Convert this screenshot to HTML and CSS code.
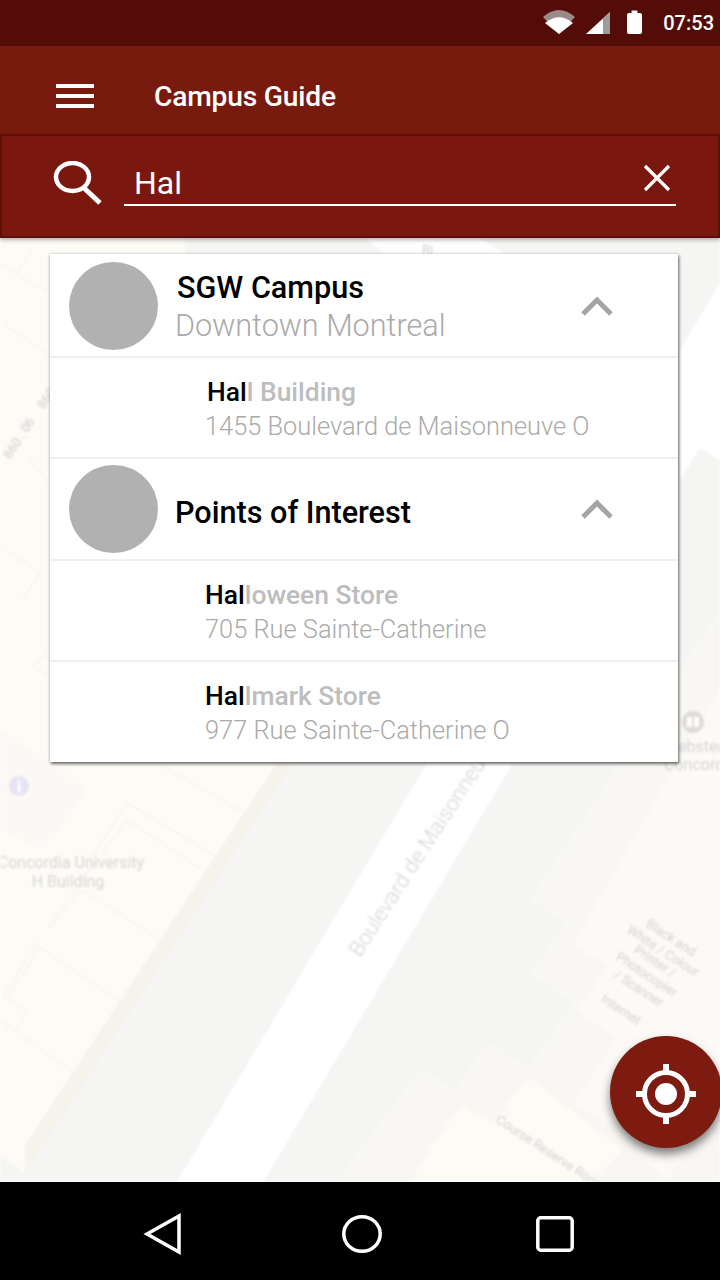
FILE: index.html
```html
<!DOCTYPE html>
<html lang="en">
<head>
<meta charset="UTF-8">
<meta name="viewport" content="width=device-width, initial-scale=1.0">
<title>Campus Guide</title>
<link rel="stylesheet" href="styles.css">
</head>
<body>
<div class="phone">
    <div class="status-bar">
        <svg class="wifi" width="32" height="24" viewBox="0 0 32 24">
            <path d="M0 7 Q16 -7 32 7 L16 24 Z" fill="#9a8a88"/>
            <path d="M2 13 Q16 1.5 30 13 L16 24 Z" fill="#fff"/>
        </svg>
        <svg class="signal" width="24" height="22" viewBox="0 0 24 22">
            <path d="M0 22 L24 0 V22 Z" fill="#fff"/>
            <path d="M17 22 V6.4 L24 0 V22 Z" fill="#9c9c9c"/>
        </svg>
        <svg class="battery" width="15" height="24" viewBox="0 0 15 24">
            <path d="M4.5 1.5 A1 1 0 0 1 5.5 0.5 H9.5 A1 1 0 0 1 10.5 1.5 V3 H13 A2 2 0 0 1 15 5 V22 A2 2 0 0 1 13 24 H2 A2 2 0 0 1 0 22 V5 A2 2 0 0 1 2 3 H4.5 Z" fill="#fff"/>
        </svg>
        <span class="clock">07:53</span>
    </div>

    <div class="app-bar">
        <div class="burger"><span></span><span></span><span></span></div>
        <h1>Campus Guide</h1>
    </div>

    <div class="search-bar">
        <svg class="search-icon" width="50" height="46" viewBox="0 0 50 46">
            <ellipse cx="19.5" cy="16" rx="16.5" ry="14" fill="none" stroke="#fff" stroke-width="4.5"/>
            <path d="M31 27 L47 42" stroke="#fff" stroke-width="5" fill="none"/>
        </svg>
        <div class="search-field">
            <span class="search-text">Hal</span>
            <svg class="clear-icon" width="30" height="30" viewBox="0 0 30 30">
                <path d="M3 3 L27 27 M27 3 L3 27" stroke="#fff" stroke-width="3.2" fill="none"/>
            </svg>
        </div>
    </div>

    <div class="map-area">
        <svg class="map" width="720" height="944" viewBox="0 238 720 944">
            <rect x="0" y="238" width="720" height="944" fill="#f5f5f4"/>
            <!-- buildings -->
            <path d="M0 238 H183 L293 763 L25 1173 L0 1155 Z" fill="#fdfbf6"/>
            <path d="M277 763 H293 L25 1173 V1145 Z" fill="#f6f2ec"/>
            <path d="M0 730 L50 762 L86 790 L70 813 L43 850 L0 830 Z" fill="#fbf8f5"/>
            <path d="M530 900 L720 610 V1182 H335 L422 1068 L455 1090 L487 1042 L528 1068 L562 1020 L573 1003 L530 973 L553 940 L565 923 Z" fill="#f8f7f4"/>
            <path d="M720 687 L573 945 L608 965 L578 1010 L617 1040 L573 1103 L613 1127 L667 1182 L720 1093 Z" fill="#fcfaf6"/>
            <path d="M528 1077 L623 1150 L590 1182 H410 L438 1137 L462 1105 L493 1123 Z" fill="#fdfbf6"/>
            <!-- roads -->
            <path d="M427 763 H513 L263 1182 H177 Z" fill="#fff"/>
            <path d="M365 238 H480 L505 254 H385 Z" fill="#fff"/>
            <path d="M720 283 L680 350 V480 L700 448 L720 460 Z" fill="#fff"/>
            <!-- outlines -->
            <g class="map-lines">
                <path d="M157 763 L257 820"/>
                <path d="M92 857 L127 803 L227 863"/>
                <path d="M47 927 L127 820 L207 873"/>
                <path d="M50 928 L82 890 L160 940"/>
                <path d="M3 997 L37 942"/>
                <path d="M27 1012 L8 997 L40 947 L120 1002"/>
                <path d="M27 1012 L17 1030"/>
                <path d="M0 1020 L73 1072"/>
                <path d="M0 263 L48 293"/>
                <path d="M17 273 L33 249"/>
                <path d="M3 324 L47 353"/>
                <path d="M27 456 L48 483"/>
                <path d="M0 546 L40 573 L23 599"/>
                <path d="M48 653 L33 666 L48 676"/>
            </g>
            <!-- labels -->
            <g class="map-text">
                <text x="71" y="868" text-anchor="middle">Concordia University</text>
                <text x="68" y="887" text-anchor="middle">H Building</text>
                <text transform="translate(360 958) rotate(-57)" class="road-text">Boulevard de Maisonneuve</text>
                <text transform="translate(10 460) rotate(-57)" class="label">860 . 06</text>
                <text transform="translate(44 410) rotate(-57)" class="label">860</text>
                <text x="422" y="254" class="label">Ri</text>
                <text transform="translate(495 1122) rotate(33)" class="small">Course Reserve Room</text>
                <text transform="translate(645 926) rotate(33)" class="small">Black and</text>
                <text transform="translate(626 932) rotate(33)" class="small">White / Colour</text>
                <text transform="translate(633 952) rotate(33)" class="small">Printer /</text>
                <text transform="translate(615 959) rotate(33)" class="small">Photocopier</text>
                <text transform="translate(613 977) rotate(33)" class="small">/ Scanner</text>
                <text transform="translate(600 1001) rotate(33)" class="small">Internet</text>
                <text x="664" y="752">Webster</text>
                <text x="664" y="770">Concordia</text>
            </g>
            <circle cx="19" cy="786" r="10" fill="#e6e3f3"/>
            <rect x="17.5" y="784" width="3" height="8" fill="#fff"/>
            <circle cx="19" cy="781" r="1.6" fill="#fff"/>
            <circle cx="693" cy="722" r="11" fill="#e0dbd9"/>
            <rect x="687" y="717" width="5" height="10" fill="#fff"/>
            <rect x="694" y="717" width="5" height="10" fill="#fff"/>
        </svg>

        <div class="results">
            <div class="group-row">
                <div class="avatar"></div>
                <div class="group-text">
                    <div class="group-title shifted">SGW Campus</div>
                    <div class="group-sub">Downtown Montreal</div>
                </div>
                <svg class="chevron" width="32" height="20" viewBox="0 0 32 20"><path d="M2 18 L16 4 L30 18" fill="none" stroke="#a5a5a5" stroke-width="5"/></svg>
            </div>
            <div class="result-row">
                <div class="result-name shifted"><b>Hal</b>l Building</div>
                <div class="result-addr">1455 Boulevard de Maisonneuve O</div>
            </div>
            <div class="group-row poi">
                <div class="avatar"></div>
                <div class="group-text">
                    <div class="group-title">Points of Interest</div>
                </div>
                <svg class="chevron" width="32" height="20" viewBox="0 0 32 20"><path d="M2 18 L16 4 L30 18" fill="none" stroke="#a5a5a5" stroke-width="5"/></svg>
            </div>
            <div class="result-row">
                <div class="result-name"><b>Hal</b>loween Store</div>
                <div class="result-addr">705 Rue Sainte-Catherine</div>
            </div>
            <div class="result-row">
                <div class="result-name"><b>Hal</b>lmark Store</div>
                <div class="result-addr">977 Rue Sainte-Catherine O</div>
            </div>
        </div>

        <button class="locate">
            <svg width="60" height="60" viewBox="0 0 60 60">
                <circle cx="30" cy="30" r="21.5" fill="none" stroke="#fff" stroke-width="5"/>
                <circle cx="30" cy="30" r="11" fill="#fff"/>
                <path d="M30 0 V10 M30 50 V60 M0 30 H10 M50 30 H60" stroke="#fff" stroke-width="6" fill="none"/>
            </svg>
        </button>
    </div>

    <div class="nav-bar">
        <svg class="nav-back" width="38" height="42" viewBox="0 0 38 42"><path d="M4 21 L36 3 V39 Z" fill="none" stroke="#fff" stroke-width="3.5"/></svg>
        <svg class="nav-home" width="40" height="38" viewBox="0 0 40 38"><ellipse cx="20" cy="19" rx="18.2" ry="17.2" fill="none" stroke="#fff" stroke-width="3.5"/></svg>
        <svg width="38" height="36" viewBox="0 0 38 36"><rect x="1.8" y="1.8" width="34.4" height="32.4" rx="3" fill="none" stroke="#fff" stroke-width="3.5"/></svg>
    </div>
</div>
</body>
</html>
```

FILE: styles.css
```css
* {
    box-sizing: border-box;
}
body {
    margin: 0;
    font-family: Roboto, "Liberation Sans", sans-serif;
}
.phone {
    width: 720px;
    height: 1280px;
    display: flex;
    flex-direction: column;
    overflow: hidden;
}
.status-bar {
    height: 46px;
    background-color: #530c07;
    display: flex;
    align-items: center;
    justify-content: flex-end;
    padding-right: 6px;
    color: #fff;
}
.wifi {
    margin: 0 11px 2px 0;
}
.signal {
    margin-right: 17px;
}
.battery {
    margin: 0 21px 2px 0;
}
.clock {
    font-size: 20px;
    font-weight: 500;
}
.app-bar {
    height: 88px;
    background-color: #791a0f;
    display: flex;
    align-items: center;
    padding: 12px 0 0 56px;
}
.burger {
    width: 38px;
    display: flex;
    flex-direction: column;
    gap: 6px;
    margin-right: 60px;
}
.burger span {
    height: 4px;
    background-color: #fff;
}
h1 {
    margin: 0;
    color: #fff;
    font-size: 28.2px;
    font-weight: 500;
    letter-spacing: -0.2px;
}
.search-bar {
    height: 104px;
    background-color: #7a1810;
    border: 2px solid #5a0f08;
    display: flex;
    align-items: flex-start;
    padding: 25px 42px 0 51px;
    box-shadow: 0 2px 4px rgba(0, 0, 0, 0.3);
    position: relative;
    z-index: 2;
}
.search-icon {
    margin-right: 21px;
    flex: none;
}
.search-field {
    flex: 1;
    height: 45px;
    border-bottom: 2px solid #fff;
    display: flex;
    align-items: center;
    justify-content: space-between;
    padding: 0 4px 0 10px;
}
.search-text {
    color: #fff;
    font-size: 32px;
}
.clear-icon {
    position: relative;
    top: -5px;
}
.map-area {
    flex: 1;
    position: relative;
    overflow: hidden;
}
.map {
    position: absolute;
    top: 0;
    left: 0;
    filter: blur(0.8px);
}
.map-lines path {
    fill: none;
    stroke: #f5f0e9;
    stroke-width: 1;
}
.map-text text {
    font-family: Roboto, sans-serif;
    font-size: 16px;
    fill: #d6d6d6;
}
.map-text .road-text {
    font-size: 21.5px;
    font-weight: 300;
    fill: #d4d4d4;
}
.map-text .label {
    font-size: 13px;
    fill: #cfcfcf;
}
.map-text .small {
    font-size: 13px;
    fill: #d3d3d3;
}
.results {
    position: absolute;
    top: 16px;
    left: 50px;
    width: 628px;
    height: 508px;
    background-color: #fff;
    box-shadow: 1px 2px 3px rgba(0, 0, 0, 0.55), 0 0 3px rgba(0, 0, 0, 0.2);
}
.group-row {
    height: 104px;
    display: flex;
    align-items: center;
    padding: 0 65px 0 19px;
    border-bottom: 2px solid #f0f0f0;
}
.group-row.poi {
    height: 102px;
}
.avatar {
    width: 89px;
    height: 88px;
    border-radius: 50%;
    background-color: #b1b1b1;
    margin: 2px 17px 0 0;
    flex: none;
}
.poi .avatar {
    margin-top: 0;
}
.group-text {
    flex: 1;
    padding-top: 4px;
}
.poi .group-text {
    padding-top: 8px;
}
.group-title {
    font-size: 30.6px;
    line-height: 38px;
    font-weight: 500;
    color: #000;
}
.group-sub {
    font-size: 30.6px;
    line-height: 38px;
    font-weight: 300;
    color: #aaa;
}
.shifted {
    margin-left: 2px;
}
.chevron {
    margin-top: 2px;
}
.poi .chevron {
    margin-top: 0;
}
.result-row {
    height: 101px;
    padding: 18px 0 0 155px;
    border-bottom: 2px solid #f0f0f0;
}
.result-row:last-child {
    border-bottom: none;
}
.result-name {
    font-size: 26.4px;
    line-height: 32px;
    font-weight: 500;
    color: #bdbdbd;
}
.result-name b {
    font-weight: 500;
    color: #000;
}
.result-addr {
    font-size: 25.4px;
    line-height: 32px;
    font-weight: 300;
    color: #aaa;
    margin-top: 2px;
}
.locate {
    position: absolute;
    top: 798px;
    left: 610px;
    width: 112px;
    height: 112px;
    border: none;
    border-radius: 50%;
    padding: 4px 0 0;
    background-color: #7d1b10;
    box-shadow: 0 6px 10px rgba(0, 0, 0, 0.5);
    display: flex;
    align-items: center;
    justify-content: center;
}
.nav-bar {
    height: 98px;
    background-color: #000;
    display: flex;
    align-items: center;
    padding: 5px 0 0 143px;
}
.nav-back {
    margin-right: 161px;
}
.nav-home {
    margin-right: 154px;
}
```
